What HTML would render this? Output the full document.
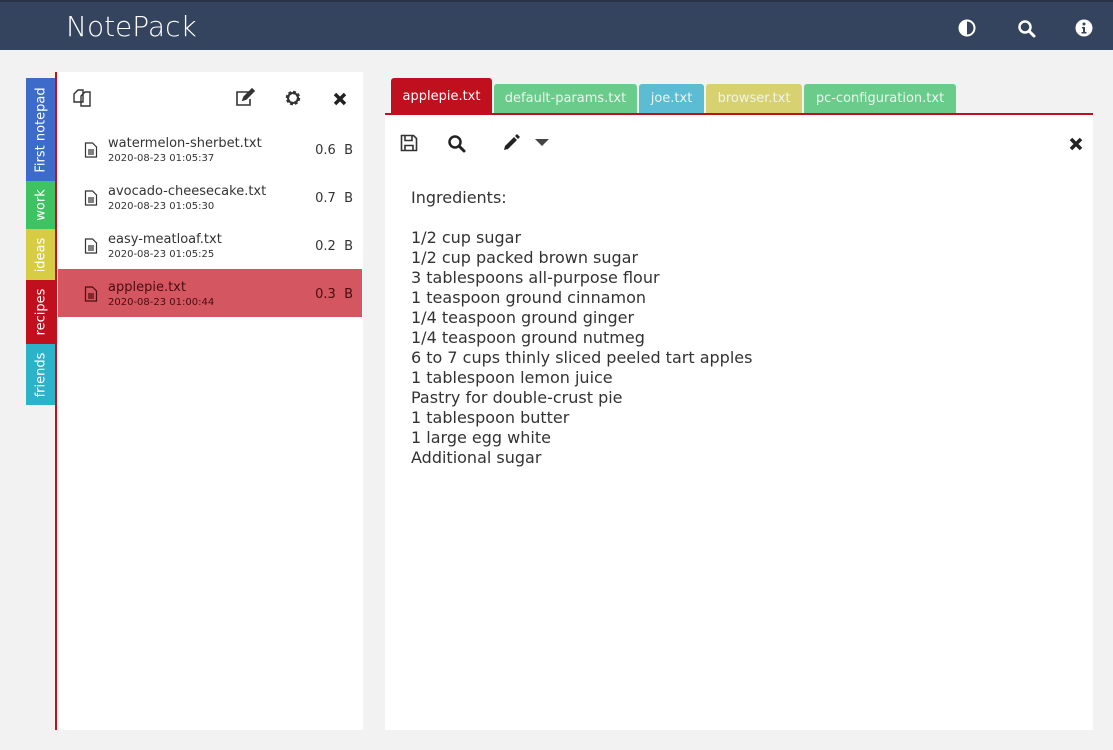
<!DOCTYPE html>
<html><head><style>
*{margin:0;padding:0;box-sizing:border-box}
body{width:1113px;height:750px;background:#f1f2f1;font-family:"DejaVu Sans","Liberation Sans",sans-serif;position:relative;overflow:hidden;color:#333}
.hdr{position:absolute;left:0;top:0;width:1113px;height:50px;background:#34445e;border-top:2px solid #2a3448}
.hdr .t{position:absolute;left:66px;top:8px;color:#fff;font-size:28px;font-weight:300}
.vt{position:absolute;left:26px;width:29px;color:#fff;font-size:13px}
.vt span{position:absolute;left:50%;top:50%;transform:translate(-50%,-50%) rotate(-90deg);white-space:nowrap}
.side{position:absolute;left:55px;top:72px;width:308px;height:658px;background:#fff;border-left:2px solid #c0101e}
.row{position:absolute;left:1px;width:304px;height:48px}
.row .n{position:absolute;left:50px;top:11px;font-size:13px}
.row .d{position:absolute;left:50px;top:28px;font-size:10px}
.row .s{position:absolute;right:9px;top:18px;font-size:13px}
.row svg{position:absolute;left:26px;top:17px}
.tab{position:absolute;top:84px;height:29px;font-size:13px;color:#eef4ee;text-align:center;line-height:30px;border-radius:3px 3px 0 0}
.ed{position:absolute;left:385px;top:113px;width:708px;height:617px;background:#fff;border-top:2px solid #c0101e}
.txt{position:absolute;left:411px;top:188px;font-size:16px;line-height:20px;white-space:pre;color:#333}
</style></head><body>
<div class="hdr"><div class="t">NotePack</div>
<svg style="position:absolute;left:958px;top:17px" width="18" height="18" viewBox="0 0 18 18"><circle cx="9" cy="9" r="7.5" fill="none" stroke="#fff" stroke-width="2"/><path d="M9 2a7 7 0 0 0 0 14z" fill="#fff"/></svg>
<svg style="position:absolute;left:1017px;top:17px" width="20" height="20" viewBox="0 0 20 20"><circle cx="8" cy="8" r="5.5" fill="none" stroke="#fff" stroke-width="2.5"/><path d="M12 12l5 5" stroke="#fff" stroke-width="3" stroke-linecap="round"/></svg>
<svg style="position:absolute;left:1075px;top:17px" width="18" height="18" viewBox="0 0 18 18"><circle cx="9" cy="9" r="8.5" fill="#fff"/><circle cx="9" cy="5" r="1.5" fill="#34445e"/><path d="M7 8h3v5h1.5v1.5h-5V13H8V9.5H7z" fill="#34445e"/></svg>
</div>
<div class="vt" style="top:78px;height:103px;background:#3c6bc9"><span>First notepad</span></div>
<div class="vt" style="top:181px;height:48px;background:#3fc262"><span>work</span></div>
<div class="vt" style="top:229px;height:51px;background:#d6cd45"><span>ideas</span></div>
<div class="vt" style="top:280px;height:64px;background:#c0101e"><span>recipes</span></div>
<div class="vt" style="top:344px;height:61px;background:#2db3c9"><span>friends</span></div>
<div class="side">
<svg style="position:absolute;left:15px;top:16px" width="22" height="22" viewBox="0 0 22 22" fill="none" stroke="#333" stroke-width="1.4"><path d="M2 6l4-4h5v12H2z M9 8l4-4h5v14H9z"/></svg>
<svg style="position:absolute;left:177px;top:16px" width="22" height="20" viewBox="0 0 22 20" fill="none" stroke="#333" stroke-width="1.6"><path d="M15 4H3v13h13V11"/><path d="M9 12l1-3 8-8 2 2-8 8z" fill="#333"/></svg>
<svg style="position:absolute;left:227px;top:17px" width="18" height="18" viewBox="0 0 18 18"><circle cx="9" cy="9" r="5.5" fill="none" stroke="#333" stroke-width="3.5" stroke-dasharray="2.6 1.7"/><circle cx="9" cy="9" r="5" fill="none" stroke="#333" stroke-width="2"/></svg>
<svg style="position:absolute;left:276px;top:20px" width="14" height="14" viewBox="0 0 14 14"><path d="M2 2l10 10M12 2L2 12" stroke="#222" stroke-width="3.5"/></svg>
<div class="row" style="top:53px"><svg width="14" height="16" viewBox="0 0 14 16" fill="none" stroke="#333" stroke-width="1.2"><path d="M1.5 1h7l4 4v10h-11z M4 8h6M4 10h6M4 12h6"/></svg><div class="n">watermelon-sherbet.txt</div><div class="d">2020-08-23 01:05:37</div><div class="s">0.6&nbsp; B</div></div>
<div class="row" style="top:101px"><svg width="14" height="16" viewBox="0 0 14 16" fill="none" stroke="#333" stroke-width="1.2"><path d="M1.5 1h7l4 4v10h-11z M4 8h6M4 10h6M4 12h6"/></svg><div class="n">avocado-cheesecake.txt</div><div class="d">2020-08-23 01:05:30</div><div class="s">0.7&nbsp; B</div></div>
<div class="row" style="top:149px"><svg width="14" height="16" viewBox="0 0 14 16" fill="none" stroke="#333" stroke-width="1.2"><path d="M1.5 1h7l4 4v10h-11z M4 8h6M4 10h6M4 12h6"/></svg><div class="n">easy-meatloaf.txt</div><div class="d">2020-08-23 01:05:25</div><div class="s">0.2&nbsp; B</div></div>
<div class="row" style="top:197px;background:#d45661;color:#4a0c10"><svg width="14" height="16" viewBox="0 0 14 16" fill="none" stroke="#4a0c10" stroke-width="1.2"><path d="M1.5 1h7l4 4v10h-11z M4 8h6M4 10h6M4 12h6"/></svg><div class="n">applepie.txt</div><div class="d">2020-08-23 01:00:44</div><div class="s">0.3&nbsp; B</div></div>
</div>
<div class="tab" style="left:391px;top:78px;height:35px;line-height:38px;width:101px;background:#c0101e;color:#fff">applepie.txt</div>
<div class="tab" style="left:494px;width:143px;background:#6acc8b">default-params.txt</div>
<div class="tab" style="left:639px;width:65px;background:#5bbcd3">joe.txt</div>
<div class="tab" style="left:706px;width:96px;background:#d8d170">browser.txt</div>
<div class="tab" style="left:804px;width:152px;background:#6acc8b">pc-configuration.txt</div>
<div class="ed">
<svg style="position:absolute;left:15px;top:19px" width="18" height="18" viewBox="0 0 18 18" fill="none" stroke="#333" stroke-width="1.6"><path d="M1.5 1.5h12l3 3v12h-15z M5 1.5v5h7v-5 M5 16.5v-5h8v5"/></svg>
<svg style="position:absolute;left:62px;top:19px" width="20" height="20" viewBox="0 0 20 20"><circle cx="8" cy="8" r="5.5" fill="none" stroke="#222" stroke-width="2.5"/><path d="M12 12l5 5" stroke="#222" stroke-width="3" stroke-linecap="round"/></svg>
<svg style="position:absolute;left:117px;top:19px" width="20" height="18" viewBox="0 0 20 18"><path d="M2 16l1-4 9-9 3 3-9 9z M13 2l2-2 3 3-2 2z" fill="#222"/></svg>
<svg style="position:absolute;left:150px;top:24px" width="14" height="8" viewBox="0 0 14 8"><path d="M0 0h14L7 7z" fill="#444"/></svg>
<svg style="position:absolute;left:684px;top:22px" width="14" height="14" viewBox="0 0 14 14"><path d="M2 2l10 10M12 2L2 12" stroke="#222" stroke-width="3.5"/></svg>
</div>
<div class="txt">Ingredients:

1/2 cup sugar
1/2 cup packed brown sugar
3 tablespoons all-purpose flour
1 teaspoon ground cinnamon
1/4 teaspoon ground ginger
1/4 teaspoon ground nutmeg
6 to 7 cups thinly sliced peeled tart apples
1 tablespoon lemon juice
Pastry for double-crust pie
1 tablespoon butter
1 large egg white
Additional sugar</div>
</body></html>
